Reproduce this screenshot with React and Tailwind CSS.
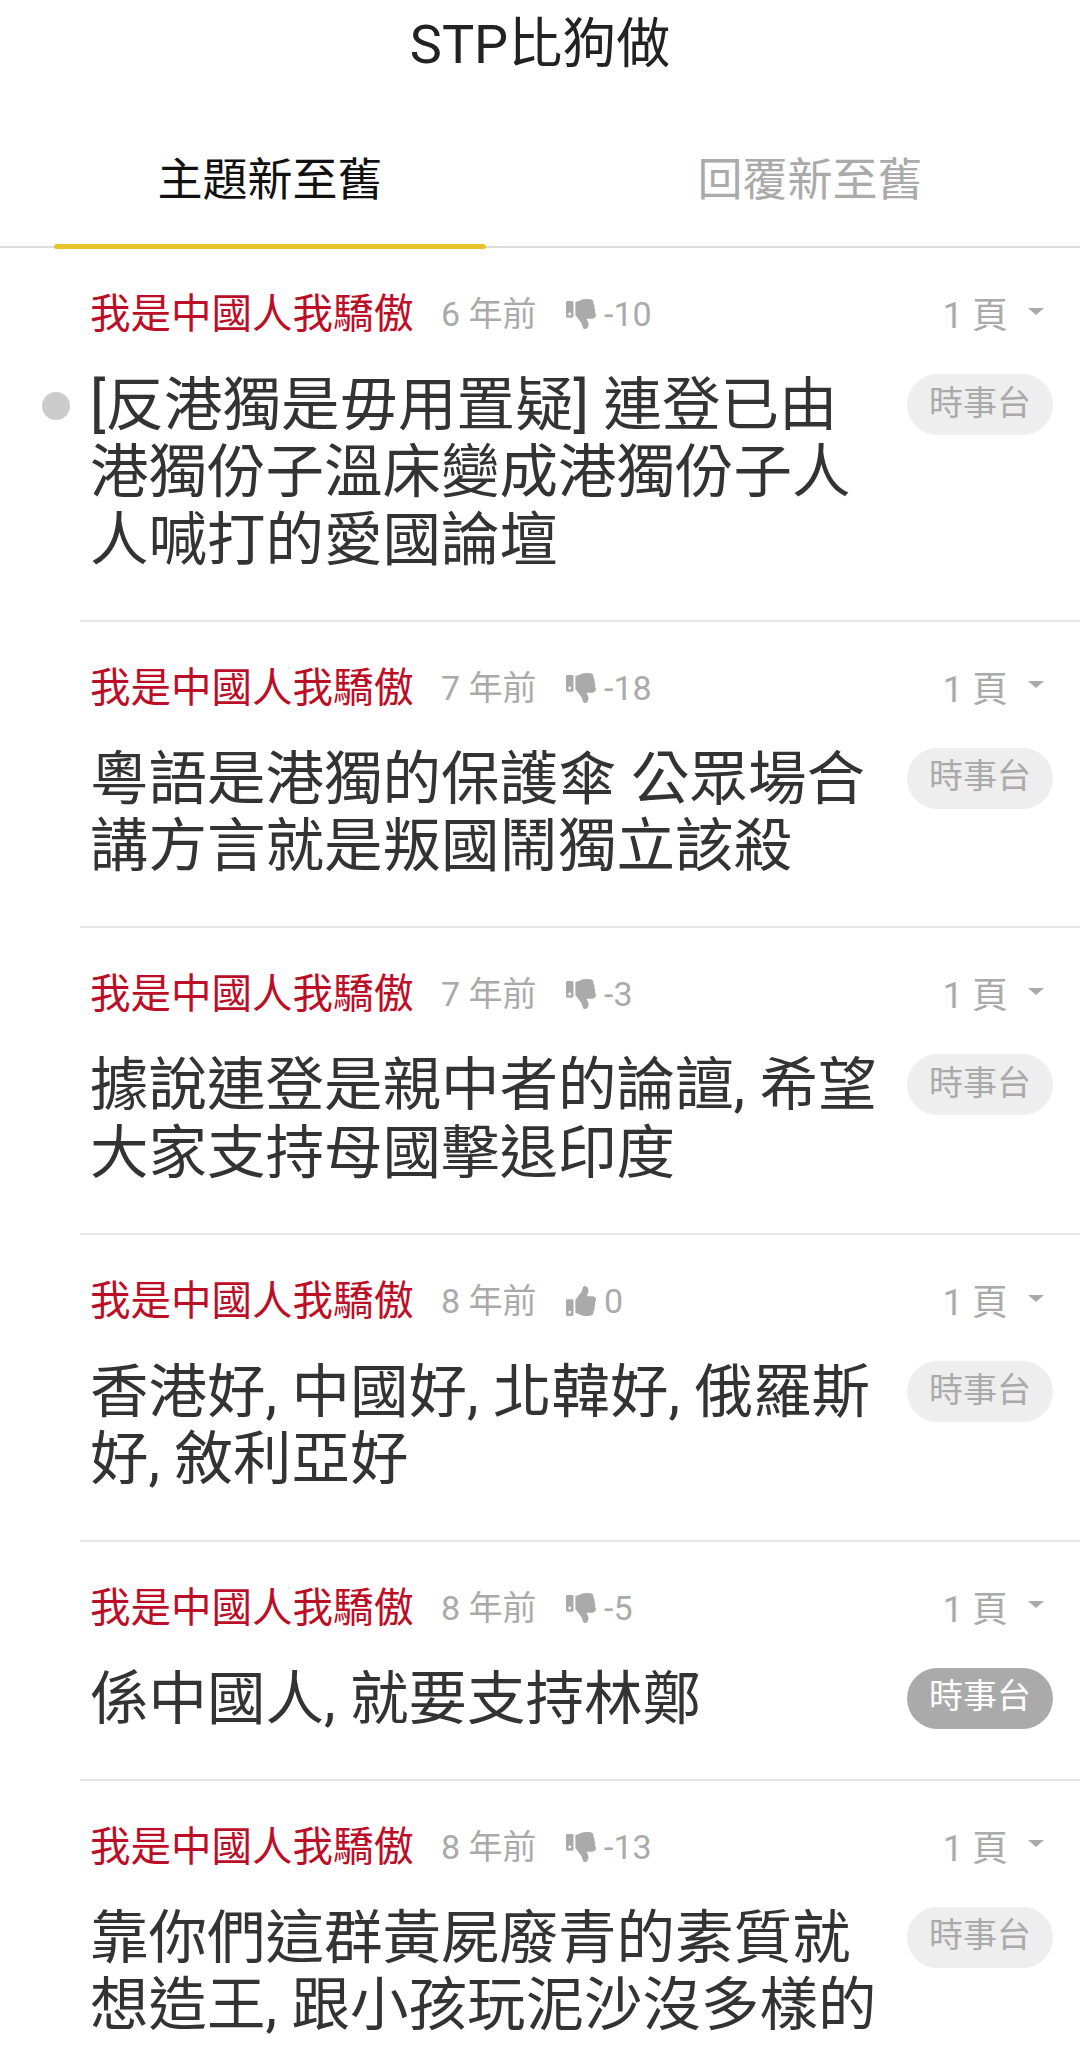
import React from 'react';
import { FaThumbsDown, FaThumbsUp } from 'react-icons/fa';

const font = 'font-["Roboto","Noto_Sans_CJK_TC",sans-serif]';

const rows = [
  { time: '6 年前', down: true, score: '-10', lines: ['[反港獨是毋用置疑] 連登已由', '港獨份子溫床變成港獨份子人', '人喊打的愛國論壇'], dot: true },
  { time: '7 年前', down: true, score: '-18', lines: ['粵語是港獨的保護傘 公眾場合', '講方言就是叛國鬧獨立該殺'] },
  { time: '7 年前', down: true, score: '-3', lines: ['據說連登是親中者的論譠, 希望', '大家支持母國擊退印度'] },
  { time: '8 年前', down: false, score: '0', lines: ['香港好, 中國好, 北韓好, 俄羅斯', '好, 敘利亞好'] },
  { time: '8 年前', down: true, score: '-5', lines: ['係中國人, 就要支持林鄭'], active: true },
  { time: '8 年前', down: true, score: '-13', lines: ['靠你們這群黃屍廢青的素質就', '想造王, 跟小孩玩泥沙沒多樣的'] },
];

function Row({ row }) {
  const Icon = row.down ? FaThumbsDown : FaThumbsUp;
  return (
    <div className="relative ml-[80px] border-b-2 border-[#e6e6e6] pl-[10px] pr-[27px] pt-[42px] pb-[46px]">
      <div className="flex h-[48px] items-center text-[34px] leading-[48px] text-[#aaaaaa]">
        <span className="w-[322px] whitespace-nowrap text-[40.5px] text-[#bd0e27]">我是中國人我驕傲</span>
        <span className="ml-[29px] w-[125px] whitespace-nowrap">{row.time}</span>
        <Icon className="h-[30px] w-[30px] shrink-0" />
        <span className="ml-[8px]">{row.score}</span>
        <span className="ml-auto mt-[4px] whitespace-nowrap text-[36px]">1 頁</span>
        <span className="ml-[20px] mr-[9px] mb-[6px] h-0 w-0 border-x-[8px] border-t-[7px] border-x-transparent border-t-[#aaaaaa]" />
      </div>
      {row.dot && <span className="absolute left-[-38px] top-[144px] h-[28px] w-[28px] rounded-full bg-[#cccccc]" />}
      <div className="mt-[34px] flex items-start justify-between">
        <div className="whitespace-nowrap text-[58.5px] leading-[67.3px] text-[#333333]">
          {row.lines.map((l, i) => (
            <div key={i}>{l}</div>
          ))}
        </div>
        <span
          className={`mt-[2px] flex h-[61px] w-[146px] shrink-0 items-center justify-center rounded-full pb-[3px] text-[34px] ${
            row.active ? 'bg-[#aaaaaa] text-white' : 'bg-[#eeeeee] text-[#aaaaaa]'
          }`}
        >
          時事台
        </span>
      </div>
    </div>
  );
}

export default function App() {
  return (
    <div className={`h-[2066px] w-[1080px] overflow-hidden bg-white ${font}`}>
      <div className="flex h-[88px] items-center justify-center text-[54px] text-[#222222]">STP比狗做</div>
      <div className="grid h-[160px] grid-cols-2 gap-x-[108px] border-b-2 border-[#dddddd] px-[54px]">
        <div className="relative flex items-center justify-center pt-[28px] text-[45px] text-[#111111]">
          主題新至舊
          <span className="absolute bottom-[-3px] left-0 right-0 h-[5px] rounded-full bg-[#e9c32c]" />
        </div>
        <div className="flex items-center justify-center pt-[28px] text-[45px] text-[#aaaaaa]">回覆新至舊</div>
      </div>
      {rows.map((r, i) => (
        <Row key={i} row={r} />
      ))}
    </div>
  );
}
